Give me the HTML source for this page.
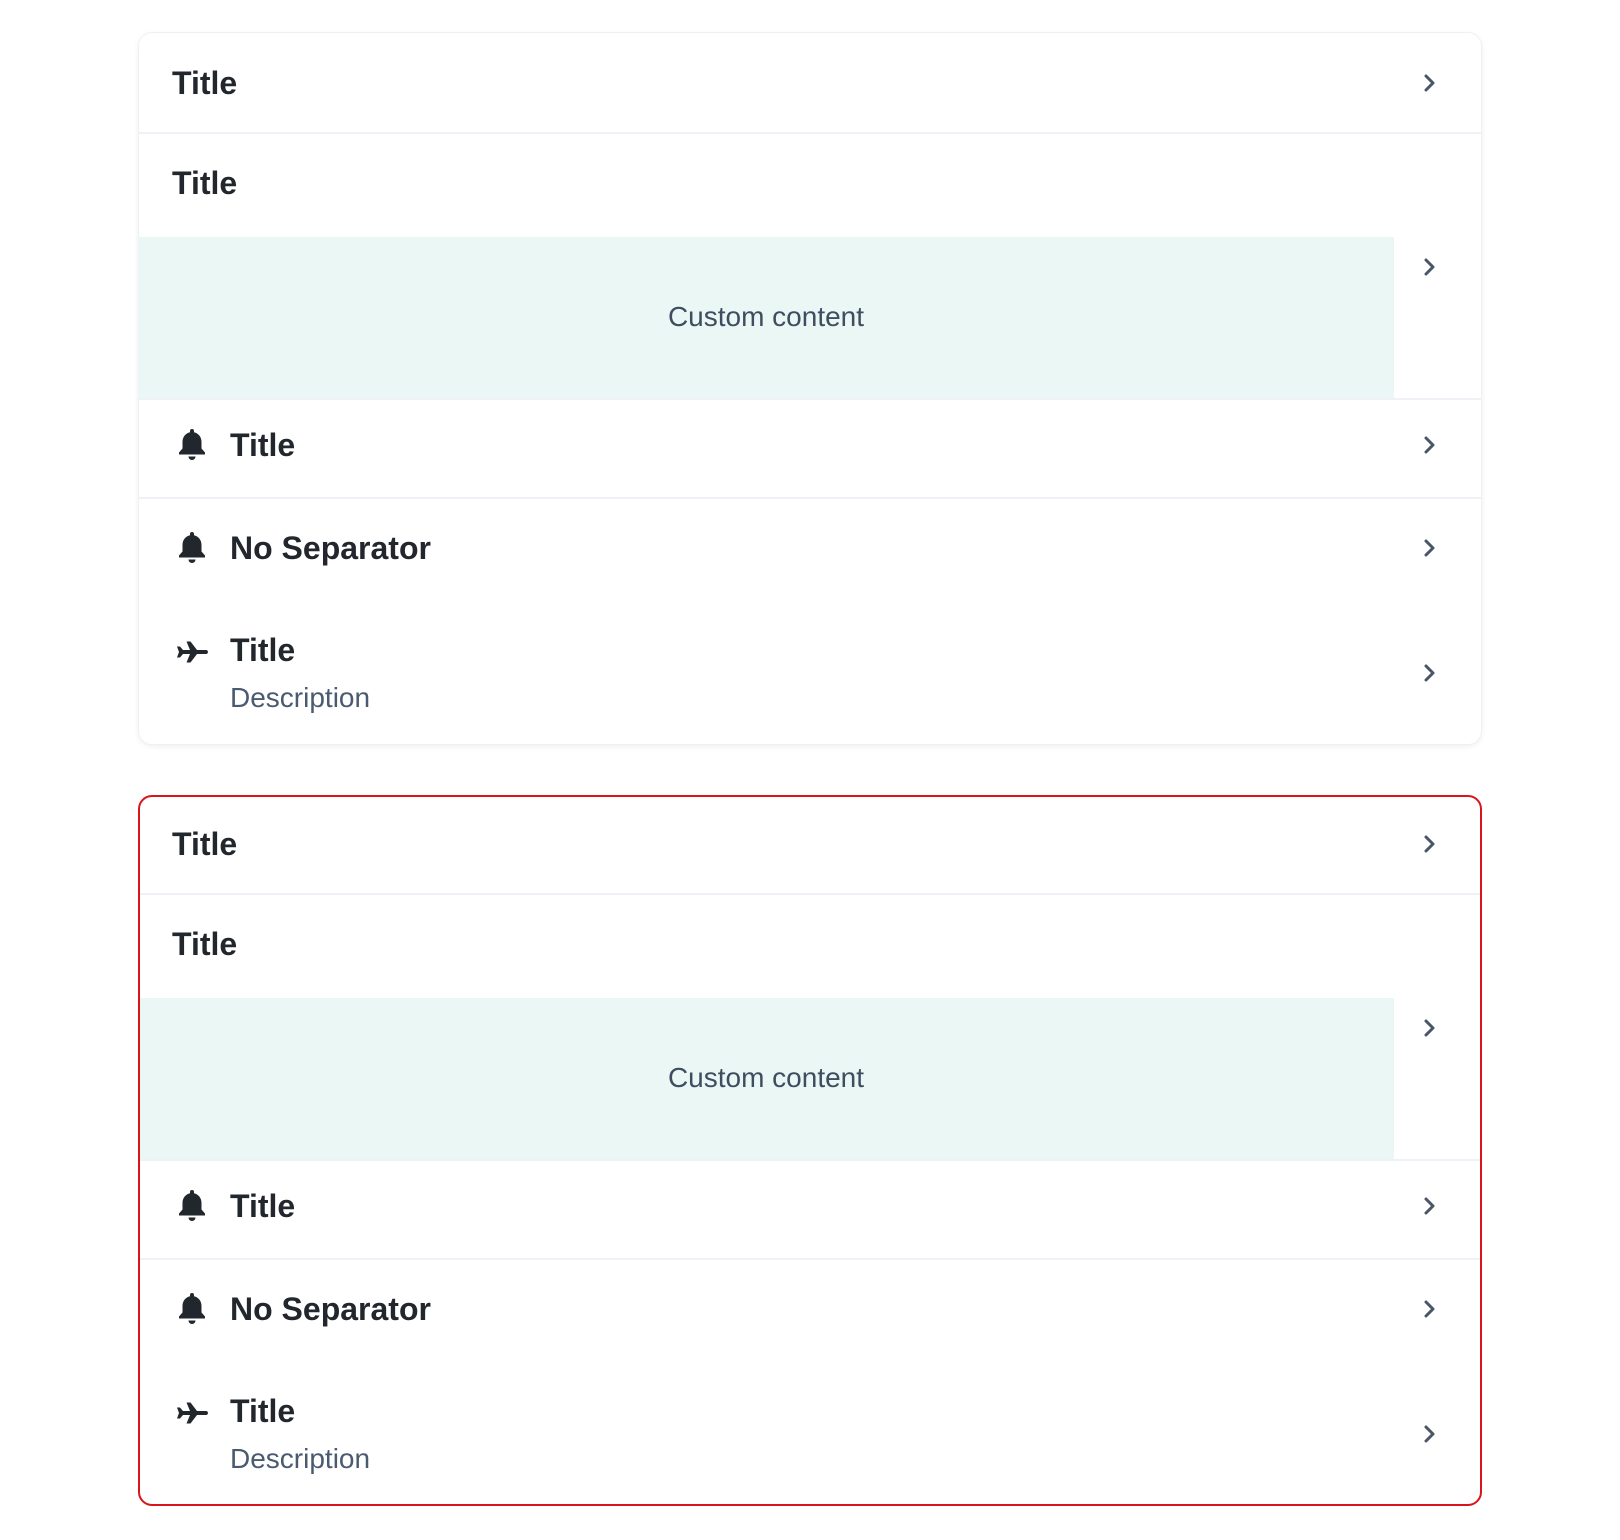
<!DOCTYPE html>
<html><head><meta charset="utf-8"><style>
*{margin:0;padding:0;box-sizing:border-box}
body{width:1620px;height:1540px;background:#fff;font-family:"Liberation Sans",sans-serif;position:relative;overflow:hidden}
.card{position:absolute;left:138px;width:1344px;height:713px;border-radius:14px;background:#fff;overflow:hidden}
.c1{top:32px;border:1px solid #eef0f3;box-shadow:0 2px 6px rgba(0,0,0,0.06);overflow:visible}
.c2{top:795px;height:711px;border:2px solid #d9141b}
.in{position:absolute;left:-1px;top:-1px;width:1344px;height:713px}
.c2 .in{left:-2px;top:-4px}
.t{position:absolute;font-weight:bold;font-size:32px;color:#22272e;line-height:40px;transform:translateY(-20px)}
.d{position:absolute;font-size:28px;color:#4a5a70;line-height:34px;transform:translateY(-17px)}
.sep{position:absolute;left:0;width:1344px;height:2px;background:#eef1f5}
.cc{position:absolute;left:0;top:205px;width:1256px;height:161px;background:#ebf7f5}
.cc span{position:absolute;left:0;right:0;top:64px;text-align:center;font-size:28px;color:#3f4d60}
.ch{position:absolute;left:1284px;width:16px;height:22px;transform:translateY(-11px)}
.ic{position:absolute;left:38px;width:32px;height:36px;transform:translateY(-18px)}
</style></head><body>
<div class="card c1"><div class="in">
 <div class="t" style="left:34px;top:51px">Title</div>
 <svg class="ch" style="top:51px" viewBox="0 0 16 22"><path d="M4 4l7 7-7 7" fill="none" stroke="#4a5568" stroke-width="3" stroke-linecap="round" stroke-linejoin="round"/></svg>
 <div class="sep" style="top:100px"></div>
 <div class="t" style="left:34px;top:151px">Title</div>
 <div class="cc"><span>Custom content</span></div>
 <svg class="ch" style="top:235px" viewBox="0 0 16 22"><path d="M4 4l7 7-7 7" fill="none" stroke="#4a5568" stroke-width="3" stroke-linecap="round" stroke-linejoin="round"/></svg>
 <div class="sep" style="top:366px"></div>
 <svg class="ic" style="top:413px" viewBox="0 0 32 36"><path d="M16 2c1.3 0 2 .8 2 2v1.3c4.5 1 7.5 4.8 7.5 9.7v6.5l3.5 4v2H3v-2l3.5-4V15c0-4.9 3-8.7 7.5-9.7V4c0-1.2.7-2 2-2z" fill="#22272e"/><path d="M12.5 29.5h7a3.5 3.5 0 0 1-7 0z" fill="#22272e"/></svg>
 <div class="t" style="left:92px;top:413px">Title</div>
 <svg class="ch" style="top:413px" viewBox="0 0 16 22"><path d="M4 4l7 7-7 7" fill="none" stroke="#4a5568" stroke-width="3" stroke-linecap="round" stroke-linejoin="round"/></svg>
 <div class="sep" style="top:465px"></div>
 <svg class="ic" style="top:516px" viewBox="0 0 32 36"><path d="M16 2c1.3 0 2 .8 2 2v1.3c4.5 1 7.5 4.8 7.5 9.7v6.5l3.5 4v2H3v-2l3.5-4V15c0-4.9 3-8.7 7.5-9.7V4c0-1.2.7-2 2-2z" fill="#22272e"/><path d="M12.5 29.5h7a3.5 3.5 0 0 1-7 0z" fill="#22272e"/></svg>
 <div class="t" style="left:92px;top:516px">No Separator</div>
 <svg class="ch" style="top:516px" viewBox="0 0 16 22"><path d="M4 4l7 7-7 7" fill="none" stroke="#4a5568" stroke-width="3" stroke-linecap="round" stroke-linejoin="round"/></svg>
 <svg class="ic" style="top:620px" viewBox="0 0 32 36"><path d="M30 16c1.2 0 2 .9 2 2s-.8 2-2 2H21l-6.5 8.5H10.5L14 20H7l-3 3.5H1L3 18 1 12.5h3L7 16h7L10.5 7.5h4L21 16z" fill="#22272e"/></svg>
 <div class="t" style="left:92px;top:618px">Title</div>
 <div class="d" style="left:92px;top:666px">Description</div>
 <svg class="ch" style="top:641px" viewBox="0 0 16 22"><path d="M4 4l7 7-7 7" fill="none" stroke="#4a5568" stroke-width="3" stroke-linecap="round" stroke-linejoin="round"/></svg>
</div></div>

<div class="card c2"><div class="in">
 <div class="t" style="left:34px;top:51px">Title</div>
 <svg class="ch" style="top:51px" viewBox="0 0 16 22"><path d="M4 4l7 7-7 7" fill="none" stroke="#4a5568" stroke-width="3" stroke-linecap="round" stroke-linejoin="round"/></svg>
 <div class="sep" style="top:100px"></div>
 <div class="t" style="left:34px;top:151px">Title</div>
 <div class="cc"><span>Custom content</span></div>
 <svg class="ch" style="top:235px" viewBox="0 0 16 22"><path d="M4 4l7 7-7 7" fill="none" stroke="#4a5568" stroke-width="3" stroke-linecap="round" stroke-linejoin="round"/></svg>
 <div class="sep" style="top:366px"></div>
 <svg class="ic" style="top:413px" viewBox="0 0 32 36"><path d="M16 2c1.3 0 2 .8 2 2v1.3c4.5 1 7.5 4.8 7.5 9.7v6.5l3.5 4v2H3v-2l3.5-4V15c0-4.9 3-8.7 7.5-9.7V4c0-1.2.7-2 2-2z" fill="#22272e"/><path d="M12.5 29.5h7a3.5 3.5 0 0 1-7 0z" fill="#22272e"/></svg>
 <div class="t" style="left:92px;top:413px">Title</div>
 <svg class="ch" style="top:413px" viewBox="0 0 16 22"><path d="M4 4l7 7-7 7" fill="none" stroke="#4a5568" stroke-width="3" stroke-linecap="round" stroke-linejoin="round"/></svg>
 <div class="sep" style="top:465px"></div>
 <svg class="ic" style="top:516px" viewBox="0 0 32 36"><path d="M16 2c1.3 0 2 .8 2 2v1.3c4.5 1 7.5 4.8 7.5 9.7v6.5l3.5 4v2H3v-2l3.5-4V15c0-4.9 3-8.7 7.5-9.7V4c0-1.2.7-2 2-2z" fill="#22272e"/><path d="M12.5 29.5h7a3.5 3.5 0 0 1-7 0z" fill="#22272e"/></svg>
 <div class="t" style="left:92px;top:516px">No Separator</div>
 <svg class="ch" style="top:516px" viewBox="0 0 16 22"><path d="M4 4l7 7-7 7" fill="none" stroke="#4a5568" stroke-width="3" stroke-linecap="round" stroke-linejoin="round"/></svg>
 <svg class="ic" style="top:620px" viewBox="0 0 32 36"><path d="M30 16c1.2 0 2 .9 2 2s-.8 2-2 2H21l-6.5 8.5H10.5L14 20H7l-3 3.5H1L3 18 1 12.5h3L7 16h7L10.5 7.5h4L21 16z" fill="#22272e"/></svg>
 <div class="t" style="left:92px;top:618px">Title</div>
 <div class="d" style="left:92px;top:666px">Description</div>
 <svg class="ch" style="top:641px" viewBox="0 0 16 22"><path d="M4 4l7 7-7 7" fill="none" stroke="#4a5568" stroke-width="3" stroke-linecap="round" stroke-linejoin="round"/></svg>
</div></div>
</body></html>
